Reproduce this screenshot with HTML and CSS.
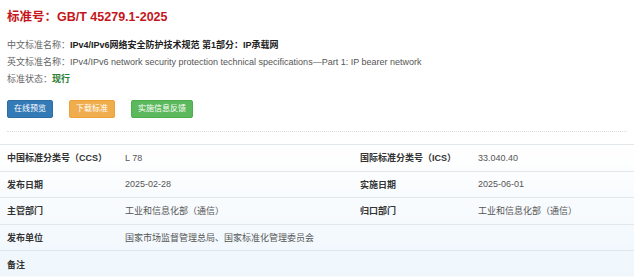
FILE: index.html
```html
<!DOCTYPE html>
<html lang="zh-CN">
<head>
  <meta charset="UTF-8">
  <meta name="viewport" content="width=device-width, initial-scale=1.0">
  <title>GB/T 45279.1-2025</title>
  <link rel="stylesheet" href="styles.css">
</head>
<body>

  <div class="page">
    <h1 class="std-title">标准号：GB/T 45279.1-2025</h1>

    <!-- Names and status -->
    <div class="std-info">
      <p><span class="info-label">中文标准名称：</span><strong class="info-cn">IPv4/IPv6网络安全防护技术规范 第1部分：IP承载网</strong></p>
      <p><span class="info-label">英文标准名称：</span><span class="info-en">IPv4/IPv6 network security protection technical specifications—Part 1: IP bearer network</span></p>
      <p><span class="info-label">标准状态：</span><span class="status">现行</span></p>
    </div>

    <!-- Actions -->
    <div class="actions">
      <a class="btn btn-blue" href="#">在线预览</a>
      <a class="btn btn-orange" href="#">下载标准</a>
      <a class="btn btn-green" href="#">实施信息反馈</a>
    </div>

    <div class="dotted"></div>

    <!-- Details table -->
    <table class="detail">
      <tr>
        <th class="first">中国标准分类号（CCS）</th>
        <td class="mid">L 78</td>
        <th class="second">国际标准分类号（ICS）</th>
        <td>33.040.40</td>
      </tr>
      <tr>
        <th class="first">发布日期</th>
        <td class="mid">2025-02-28</td>
        <th class="second">实施日期</th>
        <td>2025-06-01</td>
      </tr>
      <tr>
        <th class="first">主管部门</th>
        <td class="mid">工业和信息化部（通信）</td>
        <th class="second">归口部门</th>
        <td>工业和信息化部（通信）</td>
      </tr>
      <tr>
        <th class="first">发布单位</th>
        <td colspan="3">国家市场监督管理总局、国家标准化管理委员会</td>
      </tr>
      <tr>
        <th class="first">备注</th>
        <td colspan="3"></td>
      </tr>
    </table>
  </div>

</body>
</html>
```

FILE: styles.css
```css
/* General Reset */
* {
  margin: 0;
  padding: 0;
  box-sizing: border-box;
}
body {
  background: #fff;
  color: #333;
  font-family: "Liberation Sans", "Noto Sans CJK SC", sans-serif;
  font-size: 9px;
  overflow: hidden;
}
.page {
  padding-top: 9px;
}
.std-title {
  font-size: 12.5px;
  font-weight: bold;
  color: #c4161c;
  line-height: 16px;
  padding-left: 7px;
}
.std-info {
  margin-top: 12px;
  padding-left: 7px;
}
.std-info p {
  line-height: 17px;
}
.info-label {
  color: #666;
}
.info-cn {
  color: #222;
}
.info-en {
  color: #555;
}
.status {
  color: #2e7d32;
  font-weight: bold;
}
.actions {
  display: flex;
  gap: 16px;
  margin-top: 12px;
  padding-left: 7px;
}
.btn {
  display: inline-block;
  height: 18px;
  line-height: 16px;
  padding: 0 6px;
  font-size: 8px;
  color: #fff;
  text-decoration: none;
  border-radius: 2px;
}
.btn-blue {
  background-color: #337ab7;
  border: 1px solid #2e6da4;
}
.btn-orange {
  background-color: #f0ad4e;
  border: 1px solid #eea236;
}
.btn-green {
  background-color: #5cb85c;
  border: 1px solid #4cae4c;
}
.dotted {
  margin: 13px 7px 0 7px;
  border-top: 1px dotted #ddd;
}
.detail {
  width: 100%;
  margin-top: 12px;
  border-collapse: collapse;
  background: linear-gradient(#fff, #eef6fc);
}
.detail tr {
  height: 26.6px;
  border-top: 1px solid #e3e6ea;
}
.detail th {
  text-align: left;
  font-weight: bold;
  color: #333;
}
.detail th.first {
  padding-left: 7px;
  width: 125px;
}
.detail th.second {
  width: 118px;
}
.detail td {
  color: #555;
}
.detail td.mid {
  width: 235px;
}
```
